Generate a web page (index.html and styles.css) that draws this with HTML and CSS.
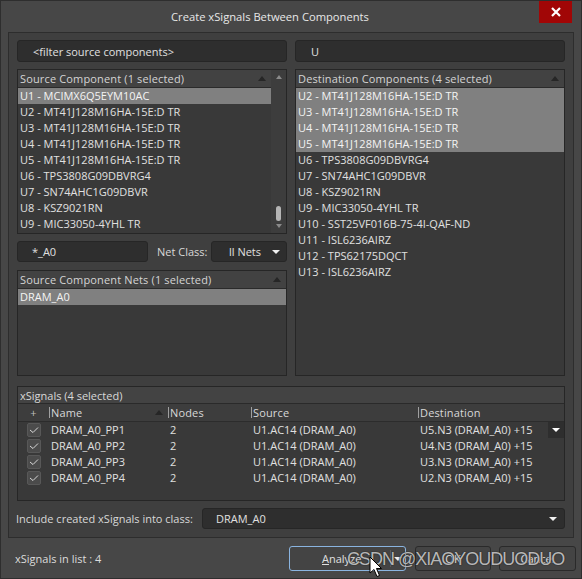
FILE: index.html
```html
<!DOCTYPE html>
<html>
<head>
<meta charset="utf-8">
<link rel="stylesheet" href="styles.css">
</head>
<body>
<div class="window">
  <div class="titlebar">
    <span class="title">Create xSignals Between Components</span>
    <div class="close"><svg width="10" height="10" viewBox="0 0 10 10"><path d="M1 1L9 9M9 1L1 9" stroke="#fff" stroke-width="2.2"/></svg></div>
  </div>
  <div class="panel">
    <div class="filters">
      <div class="input"><span class="ph">&lt;filter source components&gt;</span></div>
      <div class="input"><span class="ph">U</span></div>
    </div>
    <div class="lists">
      <div class="leftcol">
        <div class="list src">
          <div class="list-main">
            <div class="list-head"><span>Source Component (1 selected)</span><span class="sort"></span></div>
            <div class="list-body">
              <div class="item sel">U1 - MCIMX6Q5EYM10AC</div>
              <div class="item">U2 - MT41J128M16HA-15E:D TR</div>
              <div class="item">U3 - MT41J128M16HA-15E:D TR</div>
              <div class="item">U4 - MT41J128M16HA-15E:D TR</div>
              <div class="item">U5 - MT41J128M16HA-15E:D TR</div>
              <div class="item">U6 - TPS3808G09DBVRG4</div>
              <div class="item">U7 - SN74AHC1G09DBVR</div>
              <div class="item">U8 - KSZ9021RN</div>
              <div class="item">U9 - MIC33050-4YHL TR</div>
            </div>
          </div>
          <div class="vscroll">
            <span class="sup"></span>
            <span class="track"><span class="thumb"></span></span>
            <span class="sdown"></span>
          </div>
        </div>
        <div class="netrow">
          <div class="input netfilter"><span class="ph">*_A0</span></div>
          <span class="lbl">Net Class:</span>
          <div class="input combo netclass"><span>ll Nets</span><span class="dd"></span></div>
        </div>
        <div class="list nets">
          <div class="list-main">
            <div class="list-head"><span>Source Component Nets (1 selected)</span><span class="sort"></span></div>
            <div class="list-body">
              <div class="item sel">DRAM_A0</div>
            </div>
          </div>
        </div>
      </div>
      <div class="list dest">
        <div class="list-main">
          <div class="list-head"><span>Destination Components (4 selected)</span><span class="sort"></span></div>
          <div class="list-body">
            <div class="item sel">U2 - MT41J128M16HA-15E:D TR</div>
            <div class="item sel">U3 - MT41J128M16HA-15E:D TR</div>
            <div class="item sel">U4 - MT41J128M16HA-15E:D TR</div>
            <div class="item sel">U5 - MT41J128M16HA-15E:D TR</div>
            <div class="item">U6 - TPS3808G09DBVRG4</div>
            <div class="item">U7 - SN74AHC1G09DBVR</div>
            <div class="item">U8 - KSZ9021RN</div>
            <div class="item">U9 - MIC33050-4YHL TR</div>
            <div class="item">U10 - SST25VF016B-75-4I-QAF-ND</div>
            <div class="item">U11 - ISL6236AIRZ</div>
            <div class="item">U12 - TPS62175DQCT</div>
            <div class="item">U13 - ISL6236AIRZ</div>
          </div>
        </div>
      </div>
    </div>
    <div class="xsig">
      <div class="xsig-head">xSignals (4 selected)</div>
      <div class="cols">
        <div class="c c0"><span class="plus">+</span></div>
        <div class="c c1"><span>Name</span><span class="sort"></span></div>
        <div class="c c2">Nodes</div>
        <div class="c c3">Source</div>
        <div class="c c4">Destination</div>
      </div>
      <div class="trow">
        <div class="c0"><span class="chk"><svg width="10" height="8" viewBox="0 0 10 8"><path d="M1 4L4 6.5L9 1.5" fill="none" stroke="#d8d8d8" stroke-width="1"/></svg></span></div>
        <div class="c1">DRAM_A0_PP1</div><div class="c2">2</div><div class="c3">U1.AC14 (DRAM_A0)</div>
        <div class="c4 edit"><span>U5.N3 (DRAM_A0) +15</span><span class="celldd"><span class="dd"></span></span></div>
      </div>
      <div class="trow">
        <div class="c0"><span class="chk"><svg width="10" height="8" viewBox="0 0 10 8"><path d="M1 4L4 6.5L9 1.5" fill="none" stroke="#d8d8d8" stroke-width="1"/></svg></span></div>
        <div class="c1">DRAM_A0_PP2</div><div class="c2">2</div><div class="c3">U1.AC14 (DRAM_A0)</div><div class="c4">U4.N3 (DRAM_A0) +15</div>
      </div>
      <div class="trow">
        <div class="c0"><span class="chk"><svg width="10" height="8" viewBox="0 0 10 8"><path d="M1 4L4 6.5L9 1.5" fill="none" stroke="#d8d8d8" stroke-width="1"/></svg></span></div>
        <div class="c1">DRAM_A0_PP3</div><div class="c2">2</div><div class="c3">U1.AC14 (DRAM_A0)</div><div class="c4">U3.N3 (DRAM_A0) +15</div>
      </div>
      <div class="trow">
        <div class="c0"><span class="chk"><svg width="10" height="8" viewBox="0 0 10 8"><path d="M1 4L4 6.5L9 1.5" fill="none" stroke="#d8d8d8" stroke-width="1"/></svg></span></div>
        <div class="c1">DRAM_A0_PP4</div><div class="c2">2</div><div class="c3">U1.AC14 (DRAM_A0)</div><div class="c4">U2.N3 (DRAM_A0) +15</div>
      </div>
    </div>
    <div class="include">
      <span class="lbl">Include created xSignals into class:</span>
      <div class="input combo classcombo"><span>DRAM_A0</span><span class="dd"></span></div>
    </div>
  </div>
  <div class="footer">
    <span class="status">xSignals in list : 4</span>
    <div class="buttons">
      <div class="btn analyze"><span class="btxt"><u>A</u>nalyze</span><span class="split"><span class="dd"></span></span></div>
      <div class="btn ok"><span class="btxt">OK</span></div>
      <div class="btn cancel"><span class="btxt">Cancel</span></div>
    </div>
  </div>
  <div class="watermark">CSDN @XIAOYOUDUODUO</div>
  <svg class="cursor" width="14" height="22" viewBox="0 0 14 22"><path d="M1 1L1 17L5 13.5L8 20.5L10.5 19.5L7.5 12.5L12.5 12.5Z" fill="#fff" stroke="#000" stroke-width="1"/></svg>
</div>
</body>
</html>
```

FILE: styles.css
```css
* { box-sizing: border-box; }
html, body { margin: 0; padding: 0; }
body {
  font-family: "Open Sans", "Noto Sans", sans-serif;
  font-size: 11px;
  color: #dcdcdc;
  background: #474747;
}
.window {
  position: relative;
  width: 582px;
  height: 579px;
  background: #474747;
  border: 1px solid #2e2e2e;
  display: flex;
  flex-direction: column;
  overflow: hidden;
}
.titlebar {
  height: 31px;
  display: flex;
  align-items: flex-start;
}
.title {
  flex: 1;
  text-align: center;
  align-self: center;
  font-size: 11.2px;
  color: #e8e8e8;
  padding-bottom: 1px;
}
.close {
  width: 33px;
  height: 22px;
  margin-right: 9px;
  background: #a10606;
  display: flex;
  align-items: center;
  justify-content: center;
}
.panel {
  margin: 0 7px;
  height: 506px;
  border: 1px solid #2d2d2d;
  background: #3f3f3f;
  padding: 7px 8px 7px 8px;
  display: flex;
  flex-direction: column;
}
.input {
  height: 22px;
  background: #2e2e2e;
  border: 1px solid #262626;
  border-radius: 3px;
  display: flex;
  align-items: center;
  color: #e0e0e0;
}
.filters {
  display: grid;
  grid-template-columns: 270px 270px;
  gap: 8px;
  margin-bottom: 7px;
}
.filters .input { padding-left: 15px; }
.lists {
  display: grid;
  grid-template-columns: 270px 270px;
  gap: 8px;
  height: 307px;
}
.leftcol {
  display: flex;
  flex-direction: column;
}
.list {
  border: 1px solid #262626;
  background: #393939;
  display: flex;
  overflow: hidden;
}
.list-main {
  flex: 1;
  display: flex;
  flex-direction: column;
  min-width: 0;
}
.list-head {
  height: 18px;
  background: #424242;
  border-bottom: 1px solid #2a2a2a;
  display: flex;
  align-items: center;
  justify-content: space-between;
  padding: 0 5px 0 2px;
  color: #d4d4d4;
  letter-spacing: 0.15px;
}
.sort {
  width: 0;
  height: 0;
  border-left: 4.5px solid transparent;
  border-right: 4.5px solid transparent;
  border-bottom: 5px solid #262626;
}
.item {
  height: 16px;
  line-height: 16px;
  padding-left: 2px;
  white-space: nowrap;
  color: #e0e0e0;
}
.item.sel {
  background: #808080;
  color: #f4f4f4;
}
.src { height: 165px; }
.vscroll {
  width: 15px;
  background: #3d3d3d;
  display: flex;
  flex-direction: column;
  align-items: center;
  padding: 5px 0 5px;
}
.sup {
  width: 0;
  height: 0;
  border-left: 3.5px solid transparent;
  border-right: 3.5px solid transparent;
  border-bottom: 4px solid #8a8a8a;
}
.sdown {
  width: 0;
  height: 0;
  border-left: 3.5px solid transparent;
  border-right: 3.5px solid transparent;
  border-top: 4px solid #8a8a8a;
}
.track {
  flex: 1;
  width: 100%;
  display: flex;
  flex-direction: column;
  justify-content: flex-end;
  align-items: center;
  padding-bottom: 3px;
}
.thumb {
  width: 5px;
  height: 15px;
  border-radius: 3px;
  background: #b5b5b5;
}
.netrow {
  margin-top: 7px;
  height: 21px;
  display: flex;
  align-items: center;
}
.netrow .input { height: 21px; }
.netfilter {
  width: 131px;
  padding-left: 14px;
}
.netrow .lbl {
  margin-left: 9px;
  width: 54px;
  color: #d8d8d8;
}
.combo {
  justify-content: space-between;
}
.dd {
  width: 0;
  height: 0;
  border-left: 4px solid transparent;
  border-right: 4px solid transparent;
  border-top: 4px solid #f0f0f0;
}
.netclass {
  flex: 1;
  padding: 0 6px 0 17px;
}
.nets {
  margin-top: 8px;
  flex: 1;
}
.dest { height: 307px; }
.xsig {
  margin-top: 10px;
  height: 115px;
  border: 1px solid #262626;
  background: #393939;
  display: flex;
  flex-direction: column;
}
.xsig-head {
  height: 17px;
  background: #434343;
  border-bottom: 1px solid #2a2a2a;
  display: flex;
  align-items: center;
  padding-left: 2px;
  color: #d8d8d8;
}
.cols, .trow {
  display: grid;
  grid-template-columns: 31px 119px 83px 167px 1fr;
}
.cols {
  height: 18px;
  background: #3d3d3d;
  border-bottom: 1px solid #2c2c2c;
  color: #d8d8d8;
  letter-spacing: 0.15px;
}
.cols .c {
  display: flex;
  align-items: center;
  padding-left: 2px;
  position: relative;
}
.cols .c + .c::before {
  content: "";
  position: absolute;
  left: 0;
  top: 3px;
  height: 11px;
  border-left: 1px solid #a0a0a0;
}
.cols .c0 { justify-content: center; padding-left: 0; }
.cols .c1 { justify-content: space-between; padding-right: 5px; }
.plus { color: #bdbdbd; font-size: 11px; }
.trow {
  height: 16px;
  line-height: 16px;
  white-space: nowrap;
  color: #e0e0e0;
}
.trow > div { padding-left: 2px; }
.trow .c0 {
  display: flex;
  align-items: center;
  padding-left: 9px;
}
.chk {
  width: 14px;
  height: 14px;
  border-radius: 2px;
  background: #4b4b4b;
  border: 1px solid #585858;
  display: flex;
  align-items: center;
  justify-content: center;
}
.edit {
  display: flex;
  justify-content: space-between;
}
.celldd {
  width: 16px;
  height: 16px;
  background: #2e2e2e;
  display: flex;
  align-items: center;
  justify-content: center;
}
.celldd .dd { border-top-color: #ffffff; }
.include {
  margin-top: 7px;
  height: 21px;
  display: flex;
  align-items: center;
}
.include .lbl {
  width: 186px;
  margin-left: -1px;
  color: #d8d8d8;
}
.classcombo {
  flex: 1;
  height: 21px;
  padding: 0 7px 0 13px;
}
.footer {
  flex: 1;
  display: flex;
  align-items: center;
  justify-content: space-between;
  padding: 0 5px 0 14px;
}
.status { color: #dcdcdc; padding-top: 1px; }
.buttons {
  display: flex;
  gap: 8px;
  padding-top: 1px;
}
.btn {
  height: 25px;
  border: 1px solid #2a2a2a;
  border-radius: 3px;
  background: #444444;
  display: flex;
  align-items: center;
  justify-content: center;
  color: #e0e0e0;
}
.analyze {
  width: 117px;
  border-color: #8ab4e0;
  position: relative;
  justify-content: flex-start;
  padding-left: 32px;
  margin-right: 1px;
}
.analyze .split {
  position: absolute;
  right: 0;
  top: 3px;
  bottom: 3px;
  width: 15px;
  border-left: 1px solid #5a5a5a;
  display: flex;
  align-items: center;
  justify-content: center;
}
.ok { width: 76px; }
.cancel { width: 77px; }
.watermark {
  position: absolute;
  left: 346px;
  top: 548px;
  font-family: "Liberation Sans", Arial, sans-serif;
  font-size: 18px;
  letter-spacing: -1px;
  color: rgba(225, 225, 225, 0.8);
  text-shadow: 0 0 1px #1e1e1e, 0 0 1px #1e1e1e;
  white-space: nowrap;
}
.cursor {
  position: absolute;
  left: 368px;
  top: 555px;
}
```
